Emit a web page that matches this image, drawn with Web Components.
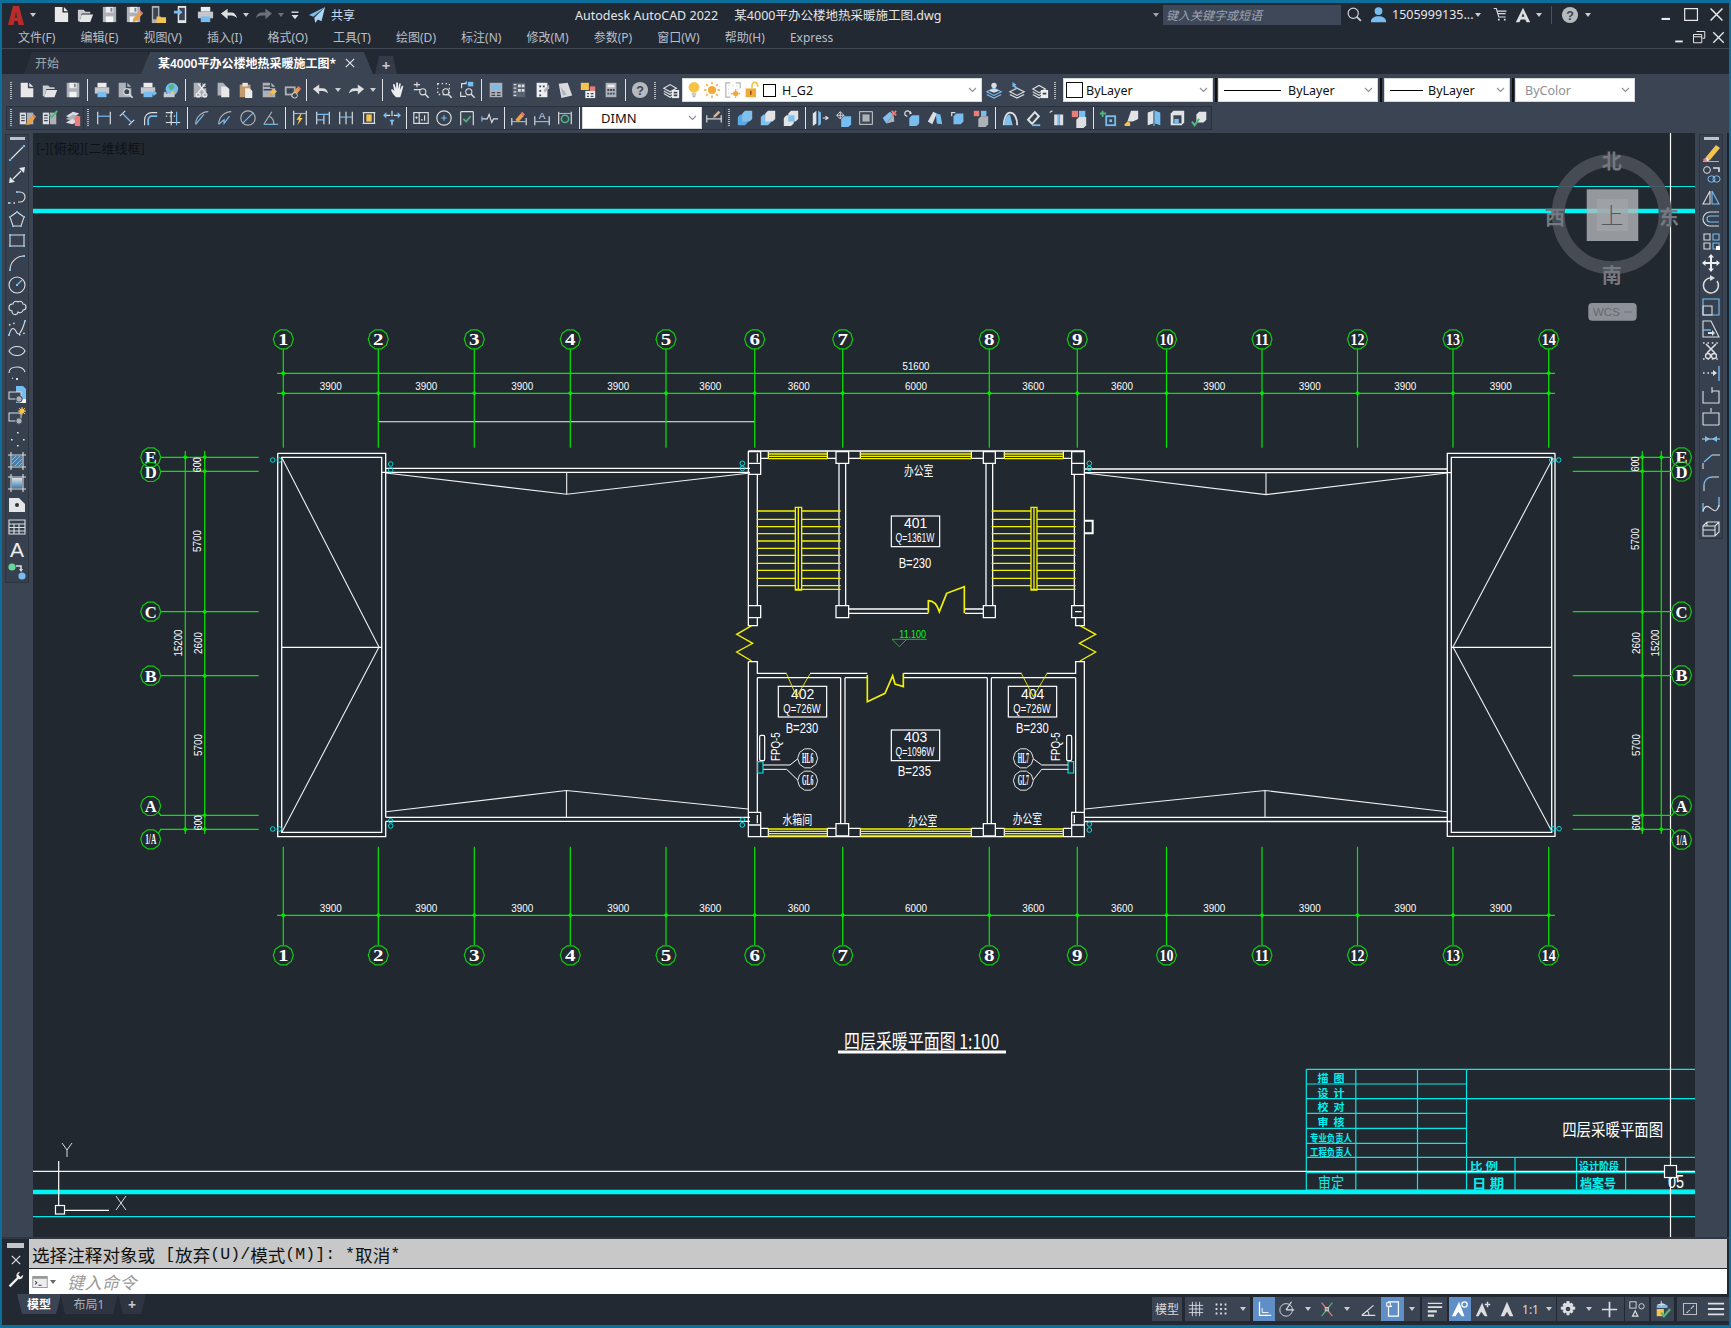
<!DOCTYPE html>
<html lang="zh">
<head>
<meta charset="utf-8">
<title>Autodesk AutoCAD 2022</title>
<style>
  html, body { margin: 0; padding: 0; background: #222933; }
</style>
</head>
<body>
<cad-app>
  <cad-titlebar></cad-titlebar>
  <cad-menubar></cad-menubar>
  <cad-doctabs></cad-doctabs>
  <cad-ribbon></cad-ribbon>
  <cad-main></cad-main>
  <cad-command></cad-command>
  <cad-statusbar></cad-statusbar>
</cad-app>
<script>
(function () {
  const UI_FONT = '"Noto Sans", "Noto Sans CJK SC", sans-serif';
  const CJK_FONT = '"Noto Sans CJK SC", sans-serif';

  const L = "#dcdee1";
  const M = "#aeb2b8";
  const B = "#78bdf0";
  const Y = "#f3c44f";
  const R = "#ea7c7c";
  const G = "#4fb67c";
  const O = "#e8a04a";

  const f = (d, c = L) => `<path d="${d}" fill="${c}"/>`;
  const s = (d, c = L, w = 1.3) => `<path d="${d}" fill="none" stroke="${c}" stroke-width="${w}"/>`;
  const dash = (d, c = L) => `<path d="${d}" fill="none" stroke="${c}" stroke-width="1.4" stroke-dasharray="1.6 2.8"/>`;
  const end = (x, y, c = B) => `<rect x="${x - 1}" y="${y - 1}" width="2" height="2" fill="${c}"/>`;
  const pencil = (c = O) => f("M9 18l1-4 6-7 3 3-6 7z", c) + f("M16 7l1.2-1.4 3 3L19 10z", R);
  const mag = (c = L) => s("M14.5 14.5l4 4", c, 1.6) + `<circle cx="12" cy="12" r="3.4" fill="#3b4453" stroke="${c}" stroke-width="1.2"/>`;
  const doc = (c = L) => f("M3 2h8v6h6v10H3z", c) + f("M12.5 2L17 6.5h-4.5z", c);
  const floppy = f("M3 2h14v16H3z", M) + f("M6 2h8v6H6z", "#eceded") + f("M6 12h8v6H6z", "#f4f4f4") + f("M11 3h2v4h-2z", "#80858c");
  const solid = (x, y, c) => f(`M${x + 3} ${y}h8v9l-3 3H${x}V${y + 3}z`, c);
  const printer = f("M5 2h10v5H5z", "#ececec") + f("M2 7h16v7H2z", "#c4c7cc") + f("M5 12h10v6H5z", B);

  const ICONS = {
    new: doc("#e8e8e8"),
    open: f("M2 5h6l2 2h5v2H6l-2 8H2z", "#c9ccd0") + f("M6 10h12l-3 8H3.5z", "#e4e5e7"),
    save: floppy,
    saveas: floppy + pencil(),
    phonefolder: f("M4 1h8v18H4z", M) + f("M5.5 3h5v12h-5z", "#3b4453") + f("M9 12h4l1 1h5v6H9z", Y),
    phonein: f("M6 1h9v18H6z", "#e4e5e7") + f("M7.5 3h6v13h-6z", "#3b4453") + f("M2 6h5V4l4 3.5L7 11V9H2z", B),
    print: printer,
    undo: f("M8 4v4h4c3 0 5 2 6 6-2-2-4-3-6-3H8v4L1 9z"),
    redo: `<g transform="matrix(-1 0 0 1 20 0)">${f("M8 4v4h4c3 0 5 2 6 6-2-2-4-3-6-3H8v4L1 9z", L)}</g>`,
    redodim: `<g transform="matrix(-1 0 0 1 20 0)">${f("M8 4v4h4c3 0 5 2 6 6-2-2-4-3-6-3H8v4L1 9z", "#6b717b")}</g>`,
    qat: f("M5 5h10v2H5z") + f("M5 10h10l-5 6z"),
    plane: f("M19 1L1 10l5 2z", B) + f("M19 1L7 13l1 6 3-4 4 2z", "#a9d6f5"),
    preview: doc(M) + mag(),
    printto: printer + f("M10 12h6v-2l4 3.5-4 3.5v-2h-6z", B),
    globe: f("M2 12h3v6H2z", M) + `<circle cx="11" cy="9" r="7" fill="${B}"/>` + f("M7 5l5-2 2 4-3 3-3-1z", G) + f("M10 11l4 1-1 4-3-1z", Y) + f("M2 14h12v4H2z", "#c9ccd0"),
    cut: doc(M) + s("M8 3l8 10M16 3L8 13", "#f0f0f0", 1.5) + `<circle cx="8" cy="15.5" r="2.2" fill="none" stroke="#f0f0f0" stroke-width="1.3"/><circle cx="15.5" cy="15.5" r="2.2" fill="none" stroke="#f0f0f0" stroke-width="1.3"/>`,
    copy: f("M4 2h6l3 3v11H4z", M) + f("M8 6h6l3 3v9H8z", "#e8e8e8"),
    paste: f("M3 4h12v14H3z", "#c49a6c") + f("M6 2h6v4H6z", "#e8e8e8") + f("M9 8h5l3 3v8H9z", "#ececec"),
    match: doc(M) + f("M4 5h9v1.5H4zM4 9h9v1.5H4z", "#3b4453") + f("M11 12l5-3 3 3-5 3z", Y) + f("M9 18l3-5 2 2z", O),
    markdoc: f("M2 6h12v10H2z", M) + f("M4 8h8v6H4z", "#3b4453") + pencil() + `<circle cx="13" cy="16" r="3" fill="#3b4453" stroke="${L}"/>`,
    hand: f("M8 18c-2-2-4-4-5.5-7.5-.4-1.3 1-1.8 1.8-1L6 11 4.5 4.5c-.2-1.4 1.5-1.6 1.9-.4L8 9V2.5c0-1.4 1.8-1.4 2 0V9l1.2-5.8c.3-1.3 2-1 1.8.3L12 10l2-4c.6-1.2 2.2-.6 1.7.7L14 13c-.6 2-1 3.5-1.5 5z", "#eeeeee"),
    zoomrt: s("M2 4h7M5.5 1v6M2 9.5h7") + mag(),
    zoomwin: dash("M3 3h13v12H3z") + s("M14.5 14.5l4 4", L, 1.6) + `<circle cx="12" cy="12" r="3.4" fill="#3b4453" stroke="${L}" stroke-width="1.2"/>`,
    zoomprev: s("M4 8V3h5M9 17H3v-5") + f("M11 1h6v5h-6z", B) + f("M7 2l3-2v4z", B) + mag(),
    props: f("M3 2h14v16H3z", M) + f("M5 4h10v6H5z", B) + s("M5 13h4M11 13h4M5 16h4M11 16h4", "#3b4453"),
    dc: f("M3 2h14v16H3z", "#5a6270") + s("M7 4H4M7 8H4M7 12H4M7 16H4", L) + f("M9 4h3v3H9zM13 4h3v3h-3zM9 9h3v3H9zM13 9h3v3h-3z"),
    palette: f("M4 2h12v16H4z", "#eeeeee") + f("M7 5h2v2H7zM11 5h2v2h-2zM7 10h2v2H7zM7 15h2v2H7z", "#3b4453") + f("M12 10l6-6v4l-5 5z", M),
    sheet: f("M3 3l10 -1 5 14-12 3z", "#d8dade") + f("M5 6l7 9-4 1z", M),
    markup: f("M2 2h9v8H2z", Y) + f("M12 6h6v5h-6z", R) + f("M7 11h11v8H7z", "#f0f0f0") + s("M9 14h2M13 14h3M9 17h2M13 17h3", "#3b4453"),
    calc: f("M4 2h12v16H4z", M) + f("M6 4h8v3H6z", "#eeeeee") + f("M6 9h2v2H6zM9 9h2v2H9zM12 9h2v2h-2zM6 13h2v2H6zM9 13h2v2H9zM12 13h2v2h-2z", "#3b4453"),
    help: `<circle cx="10" cy="10" r="9" fill="#b6b9be"/><text x="10" y="15" font-family="Liberation Sans, sans-serif" font-weight="700" font-size="14" text-anchor="middle" fill="#40464f">?</text>`,
    layerstate: s("M2 8l7-4 7 4-7 4z M2 11l7 4 3-2 M2 14l7 4 3-2") + f("M11 10h8v9h-8z", "#eeeeee") + f("M13 12h4v2h-4zM13 15h4v2h-4z", "#3b4453"),
    bulb: `<circle cx="10" cy="7" r="6" fill="#f6c343"/>` + f("M7.5 13h5v3h-5z", "#c9ccd0") + f("M8.5 16h3v2h-3z", M),
    sun: `<circle cx="10" cy="10" r="4.5" fill="#f3a93a"/>` + s("M10 1v3M10 16v3M1 10h3M16 10h3M3.5 3.5l2 2M14.5 14.5l2 2M3.5 16.5l2-2M14.5 5.5l2-2", "#f3a93a", 1.6),
    frozen: s("M7 2H2v16h5M13 2h5v6", M) + dash("M5 5h10v10H5z") + `<circle cx="13" cy="14" r="3" fill="#f3a93a"/>` + s("M13 9v2M13 17v2M8 14h2M16 14h2", "#f3a93a"),
    lock: f("M2 8h13v11H2z", "#f3a93a") + s("M10 8V4a3.5 3.5 0 0 1 7 0v2", "#f6c343", 2) + f("M7.5 11h2v5h-2z", "#8a5a14"),
    swatch: `<rect x="2" y="2" width="16" height="16" fill="#fff" stroke="#000" stroke-width="1.3"/>`,
    laycur: s("M2 12l8-4 8 4-8 4z M2 15l8 4 8-4", B) + `<circle cx="10" cy="5" r="3" fill="${L}"/>` + f("M5 11c0-3 10-3 10 0l-5 2z"),
    laymatch: s("M2 12l8-4 8 4-8 4z M2 15l8 4 8-4") + f("M5 1l4 3-1 1 3 3-2 1-3-3-1 1z", B),
    layprev: s("M2 9l7-4 7 4-7 4z M2 12l7 4 3-2 M2 15l7 4 3-2") + f("M11 10h8v9h-8z", "#eeeeee") + f("M13 13h4v2h-4z", "#3b4453"),
    book: f("M2 4h7v13H2z", "#dcdee1") + f("M10 4h7v13h-7z", M) + s("M3.5 7h4M3.5 10h4M3.5 13h4", "#3b4453") + pencil(),
    bookcheck: f("M2 4h7v13H2z", "#dcdee1") + f("M10 4h7v13h-7z", M) + s("M3.5 7h4M3.5 10h4M3.5 13h4", "#3b4453") + s("M9 6l3 3 6-7", G, 2),
    stack: f("M2 8l8-5 7 2-8 5z", L) + f("M2 11l8-5 7 2-8 5z", M) + f("M2 15l7-4 5 1v3l-5 2z", L) + f("M12 8h6v11h-6z", R),
    dlin: s("M3 3v14M17 3v14") + s("M3 8h14", B),
    dali: s("M2 8l6-6M12 18l6-6") + s("M5 5l10 10", B),
    darc: s("M4 18v-6a8 8 0 0 1 8-8h6") + s("M8 18v-6a4 4 0 0 1 4-4h6", B, 2),
    dord: s("M2 15h16M2 4h8M8 2v16") + s("M14 3v15", B) + dash("M2 8h12"),
    drad: s("M3 17A14 14 0 0 1 17 3", M) + s("M3 17L12 6", B),
    djog: s("M3 17A14 14 0 0 1 17 3", M) + s("M3 17l6-5v4l6-8", B),
    ddia: `<circle cx="10" cy="10" r="8" fill="none" stroke="${M}" stroke-width="1.3"/>` + s("M4 16L16 4", B),
    dang: s("M2 17h16", B) + s("M2 17L11 3", M) + s("M8 8a9 9 0 0 1 5 9", M),
    dquick: s("M3 2v16M17 2v16") + s("M3 5h14", B) + f("M11 5l-5 7h3l-2 6 6-8h-3l2-5z", Y),
    dbase: s("M3 3v14M17 3v14M11 7v10") + s("M3 6h14M3 12h8", B),
    dcont: s("M3 3v14M10 3v14M17 3v14") + s("M3 9h14", B),
    dspace: s("M3 4h14M3 16h14") + f("M7 6h6v8H7z", Y) + s("M4 4v12M16 4v12", L),
    dbreak: s("M1 7h7M12 7h7") + s("M10 2v6M10 12v6") + f("M7 12h6l-3 4z", B) + s("M1 7l2-2v4z M19 7l-2-2v4z", B),
    dtol: `<rect x="2" y="4" width="16" height="12" fill="none" stroke="${L}" stroke-width="1.3"/>` + s("M8 4v12") + f("M3.5 9.5l1.5-1.5 1.5 1.5-1.5 1.5z") + s("M10 12h2M14 7v6"),
    dcen: `<circle cx="10" cy="10" r="8" fill="none" stroke="${L}" stroke-width="1.3"/>` + s("M10 7v6M7 10h6", B),
    dinsp: s("M3 3h14M3 3v15M17 3v15") + f("M5 6h10v10H5z", "#3b4453") + s("M6 11l3 3 5-6", G, 1.8),
    djogl: s("M1 11h6l2-5 3 9 2-4h5") + s("M1 8v6", B),
    dedit: s("M2 10v8M18 10v8") + s("M2 14h16", B) + f("M6 12l6-7 3 3-6 7z", O) + f("M12 5l1.5-2 3 3L15 8z", R),
    dtedit: s("M2 8v10M18 8v10") + s("M2 14h16", B) + `<text x="10" y="11" font-family="Liberation Sans, sans-serif" font-size="11" text-anchor="middle" fill="${L}">A</text>`,
    dupd: s("M3 3v14M17 3v14") + s("M3 5h14", B) + `<circle cx="10" cy="11" r="4" fill="none" stroke="${G}" stroke-width="1.8"/>`,
    dstyle: s("M2 7v8M18 7v8") + s("M2 11h16") + f("M10 7l5-5 2 2-5 5-3 1z", "#d8b48a"),
    un: solid(2, 6, "#5aa8e4") + solid(7, 2, "#7fc0ee"),
    sb: solid(2, 6, "#7fc0ee") + solid(7, 2, "#e2e3e5"),
    it: solid(7, 2, "#e2e3e5") + solid(2, 7, "#e2e3e5") + f("M7 7h7v7H7z", "#7fc0ee"),
    xl: f("M2 5l4-3v14l-4 3z", "#e2e3e5") + f("M8 2l3 2v13l-3 2z", B) + s("M13 10h6M16 8l3 2-3 2", L),
    mvf: s("M7 3v8M3 7h8M7 3l-2 2M7 3l2 2M3 7l2-2M3 7l2 2M11 7L9 5M11 7L9 9M7 11l-2-2M7 11l2-2", L, 1) + solid(8, 8, B),
    cpf: f("M4 3h14v14H4z", "#3b4453") + `<rect x="3" y="3" width="14" height="14" fill="none" stroke="${L}"/>` + f("M6 6h8v8H6z", M),
    dlf: f("M3 10l8-7 4 3-8 10z", "#7fc0ee") + f("M7 16l8-10 1 8z", M) + s("M13 2l5 5M18 2l-5 5", R, 2),
    rtf: s("M8 5a3 3 0 1 0-3 3", L) + f("M8 2l2 3-3 1z") + solid(7, 7, B),
    tpf: f("M2 14l6-11 4 2-5 12z", L) + f("M11 5l5 1 2 11-6-1z", B),
    cof: s("M3 8V4h4") + solid(5, 5, B),
    clf: f("M2 2h6v6H2z", R) + f("M10 2h6v6h-6z", B) + solid(7, 8, M),
    imp: s("M3 18c0-7 3-14 7-14 5 0 8 6 8 14", L, 2) + f("M4 18c0-6 2-12 6-12l3 12z", "#7fc0ee"),
    shl: f("M3 12l9-10 6 6-9 10z", "#e2e3e5") + f("M6 12l6-7 3 3-6 7z", "#3b4453") + f("M9 17h9v2H9z", B),
    clr: s("M3 4l3-2") + f("M8 6h4v12H8zM14 6h4v12h-4z", L) + f("M12 6h2v12h-2z", B),
    sep: f("M2 2h7v7H2z", R) + f("M10 2h7v7h-7z", B) + solid(7, 9, L),
    plus: s("M4 2v7M1 5h7", G, 2) + f("M8 8h10v10H8z", "#3b4453") + `<rect x="8" y="8" width="10" height="10" fill="none" stroke="${B}" stroke-width="2"/><rect x="11.5" y="11.5" width="3" height="3" fill="${B}"/>`,
    brm: f("M10 2h8v9l-6 3H6z", "#e2e3e5") + f("M6 14l3 1v4H3v-2z", Y),
    mir: f("M3 4l6-2v14l-6 2z", "#e2e3e5") + f("M11 2l6 2v14l-6-2z", B) + s("M10 1v18", B),
    bx: f("M3 5l3-3h12v13l-3 3H3z", "#e2e3e5") + f("M6 7h9v9H6z", "#3b4453") + f("M7 11h5v5H7z", B),
    chk: solid(6, 3, "#e2e3e5") + s("M1 14l3 4 5-7", G, 2.2),
    line: s("M4 16L16 4", "#e6e8ea", 1.1) + end(3, 17, B) + end(17, 3, B),
    xline: s("M6 14L14 6", "#e6e8ea") + f("M18 2l-1 6-5-5zM2 18l6-1-5-5z", "#e6e8ea"),
    pline: dash("M2 16h8") + s("M10 5h3a5 5 0 0 1 0 10h-2", L, 1.1) + end(2, 16, B) + end(10, 5, B),
    poly: s("M10 3l7 5-3 9H6L3 8z", L, 1.1) + end(10, 3, B) + end(17, 8, B) + end(3, 8, B) + end(14, 17, B) + end(6, 17, B),
    rect: s("M3 4h14v11H3z", L, 1.1) + end(3, 4, B) + end(17, 4, B) + end(3, 15, B) + end(17, 15, B),
    arc: s("M3 17A14 14 0 0 1 17 3", L, 1.1) + end(3, 17, B) + end(17, 3, B),
    circle: `<circle cx="10" cy="10" r="8" fill="none" stroke="${L}" stroke-width="1.1"/>` + s("M10 10l5-5", B) + end(10, 10, B),
    cloud: s("M6 7a3 3 0 0 1 5-2 3 3 0 0 1 5 2 3 3 0 0 1 0 6 3 3 0 0 1-5 2 3 3 0 0 1-6-1 3 3 0 0 1 1-7z", L, 1.1),
    spline: dash("M2 6l6-2M12 16l6-2") + s("M2 16c3-12 7-4 8-2s4 2 8-12", L, 1.1) + end(2, 16, B) + end(18, 2, B),
    ellipse: s("M2 10c3-6 13-6 16 0c-3 6-13 6-16 0z", L, 1.1),
    ellarc: s("M10 4c4 0 7 2 8 5M2 10c0-4 3-6 8-6M5 15l1 .5", L, 1.1) + f("M9 15h2v2H9z"),
    block: f("M9 1h7l3 3v14H9z", B) + f("M11 14h8v4h-8z", "#f2f2f2") + f("M2 7h12v7H2z", "#3b4453") + `<rect x="2" y="7" width="12" height="7" fill="none" stroke="${L}"/><circle cx="12" cy="14" r="3.2" fill="${M}" stroke="#3b4453"/>`,
    blockn: f("M2 6h12v8H2z", "#3b4453") + `<rect x="2" y="6" width="12" height="8" fill="none" stroke="${L}"/><circle cx="12" cy="14" r="3.2" fill="${M}" stroke="#3b4453"/>` + `<circle cx="15" cy="4" r="2.5" fill="${Y}"/>` + s("M15 0v8M11 4h8M12 1l6 6M18 1l-6 6", Y, 1),
    point: f("M10 3h1.6v1.6H10zM4 10h1.6v1.6H4zM16 10h1.6v1.6H16zM10 16h1.6v1.6H10z", "#e6e8ea"),
    hatch: s("M1 4h18M1 16h18M4 1v18M16 1v18", L, 1.1) + f("M5 5h10v10H5z", "#4d7ea6") + s("M5 9l4-4M5 13l8-8M8 15l7-7M12 15l3-3", B, 1),
    grad: s("M1 4h18M1 16h18M4 1v18M16 1v18", L, 1.1) + `<rect x="5" y="5" width="10" height="10" fill="url(#gr)"/><defs><linearGradient id="gr" x1="0" y1="0" x2="0" y2="1"><stop offset="0" stop-color="#dde3ea"/><stop offset="1" stop-color="#3f7fb2"/></linearGradient></defs>`,
    region: f("M2 3h10l6 6v8H2z", "#e3e5e8") + `<circle cx="10" cy="10" r="2" fill="#333"/>`,
    table: s("M2 3h16v14H2zM2 7h16M2 10.5h16M2 14h16M7 7v10M12 7v10", L, 1.1),
    texta: `<text x="10" y="17.5" font-family="Liberation Sans, sans-serif" font-size="21" text-anchor="middle" fill="#eceef0">A</text>`,
    addsel: `<circle cx="5" cy="6" r="3.6" fill="#6ad79a"/><circle cx="15" cy="15" r="3.6" fill="${B}"/>` + s("M9 5h5v4", L, 1.6) + f("M12 8h4l-2 3z"),
    erase: f("M5 14L15 2l4 3L9 17z", Y) + f("M5 14l4 3-2 1H3z", "#eee") + f("M2 18h16v1H2z", M) + `<circle cx="4" cy="17" r="1.8" fill="${R}"/>`,
    cpy: `<circle cx="6" cy="5" r="3.4" fill="none" stroke="${L}"/>` + s("M12 3h6v4", L, 1.6) + `<ellipse cx="10.5" cy="14" rx="3.6" ry="3.2" fill="none" stroke="${B}"/><ellipse cx="15.5" cy="14" rx="3.6" ry="3.2" fill="none" stroke="${B}"/>`,
    mirror: s("M2 17L9 4v13z", L, 1.1) + s("M18 17L11 4v13z", B, 1.1),
    offset: s("M18 3H9a6 6 0 0 0 0 14h9", L, 1.1) + s("M18 7H9a2 2 0 0 0 0 6h9", B, 1.1),
    array: s("M3 3h6v6H3zM3 12h6v6H3z", L, 1.1) + s("M12 3h6v6h-6z", B, 1.1) + s("M12 12h6v6h-6z", B, 1.1) + f("M15 15h4v4h-4z", "#fff"),
    move: f("M10 1l3 3.5h-2V9h4.5V7l3.5 3-3.5 3v-2H11v4.5h2L10 19l-3-3.5h2V11H4.5v2L1 10l3.5-3v2H9V4.5H7z", "#eceef0"),
    rotate: s("M16 6a7.5 7.5 0 1 1-5-3", L, 1.4) + f("M9 0l5 3-5 3z"),
    scale: s("M2 2h16v16H2z", B, 1.1) + s("M2 9h9v9H2z", L, 1.1),
    stretch: s("M2 2h8l8 16H2z", L, 1.1) + s("M2 11h8", B) + f("M7 13h4v-2l3 3-3 3v-2H7z"),
    trim: dash("M2 2h16M2 18h16") + s("M5 3l9 9M15 3l-9 9", L, 1.6) + `<circle cx="7" cy="15" r="2.5" fill="none" stroke="${L}" stroke-width="1.3"/><circle cx="13" cy="15" r="2.5" fill="none" stroke="${L}" stroke-width="1.3"/>`,
    extend: dash("M2 10h8") + s("M10 10h5") + f("M12 7l4 3-4 3z") + s("M18 3v15", B),
    brk: s("M2 6v12h16V6h-7M11 2v6", L, 1.1),
    brkat: s("M2 18V6h7M11 6h7v12M10 1v6M2 18h16", L, 1.1),
    join: s("M1 10h18", M) + f("M4 7l5 3-5 3zM16 7l-5 3 5 3z", B),
    chamfer: s("M2 18v-6M11 4h8", L, 1.1) + s("M3 11L11 4", B),
    fillet: s("M3 18v-6M11 4h7", L, 1.1) + s("M3 12a8 8 0 0 1 8-8", B),
    blend: s("M2 17V8M18 2v10", B) + s("M2 16c5-14 12 10 16-6", L, 1.1),
    cube3d: s("M2 9l4-4h12v10l-4 4H2zM2 9h12v10M14 9l4-4M6 5v4M2 13h12", L, 1.1),
    term: `<rect x="1" y="3" width="18" height="14" fill="#eee" stroke="#888"/>` + f("M1 3h18v3H1z", "#999") + s("M4 9l2 2-2 2M8 14h4", "#444"),
    wrench: f("M15.5 1a4.5 4.5 0 0 0-4 6.5L2 17l2 2 9.5-9.5A4.5 4.5 0 0 0 19 4.5L16 7l-3-3 2.5-3z", "#f0f0f0"),
    grid: s("M2 6h16M2 10h16M2 14h16M6 2v16M10 2v16M14 2v16", L, 1),
    dots: f("M4 4h2v2H4zM9 4h2v2H9zM14 4h2v2h-2zM4 9h2v2H4zM9 9h2v2H9zM14 9h2v2h-2zM4 14h2v2H4zM9 14h2v2H9zM14 14h2v2h-2z"),
    ortho: s("M5 2v15h13", "#fff", 1.4) + s("M8 9v5h7", "#fff", 1),
    polar: `<circle cx="9" cy="11" r="7" fill="none" stroke="${L}"/>` + s("M9 11h9M9 11l6-9", L),
    osnap: s("M4 3l12 15", R) + s("M16 3L4 18", G) + `<rect x="8" y="8.5" width="3.5" height="3.5" fill="none" stroke="${L}"/>`,
    iso: s("M2 17h15M2 17L15 6", L) + s("M8 11.5a8 8 0 0 1 2 5.5", L),
    snap3d: s("M5 2h11v16H5zM5 7h4M5 7V2", "#fff", 1.3) + f("M3 3h4v4H3z", "#6b9bd1") + `<rect x="3" y="3" width="4" height="4" fill="none" stroke="#fff"/>`,
    lweight: f("M2 3h16v1.5H2zM2 7h16v2H2zM2 11.5h10v2.5H2zM2 16h7v2.5H2z"),
    anno1: f("M9 2L1 18h4l3-5 4 5h3z", "#fff") + `<circle cx="15" cy="5" r="3" fill="none" stroke="#fff" stroke-width="1.4"/>`,
    anno2: f("M9 3L2 18h3l3-5 4 5h3z", L) + s("M15 2v6M12 5h6", L, 1.6),
    anno3: f("M10 2L3 18h4l3-5 3 5h4z", L),
    gear: f("M8.5 1h3l.5 3 2-1 2 2-1 2 3 .5v3l-3 .5 1 2-2 2-2-1-.5 3h-3l-.5-3-2 1-2-2 1-2-3-.5v-3l3-.5-1-2 2-2 2 1z", L) + `<circle cx="10" cy="10" r="2.6" fill="#3b4453"/>`,
    cross: f("M9 1h2v8h8v2h-8v8H9v-8H1V9h8z"),
    shapes: `<rect x="2" y="2" width="7" height="7" fill="none" stroke="${L}"/><circle cx="15" cy="7" r="3" fill="none" stroke="${L}"/>` + s("M5 18l3-6 3 6z", L),
    isolate: f("M3 6l6-3 6 3v3H3z", B) + f("M3 10h8v8H3z", Y) + s("M8 14l3 4 7-8", G, 2.4) + s("M8 1v6M4 5h8", L, 1),
    full: `<rect x="2" y="3" width="16" height="14" fill="none" stroke="${L}"/>` + f("M10.5 9.5L15 5v3l-1-1-2 3zM9.5 10.5L5 15h3l-1-1 3-2z", L),
    menu3: f("M1 3h18v2H1zM1 9h18v2H1zM1 15h18v2H1z"),
    searchmag: s("M12.5 12.5l5 5", "#cfd3d8", 2) + `<circle cx="8.5" cy="8.5" r="6" fill="none" stroke="#cfd3d8" stroke-width="1.4"/>`,
    user: `<circle cx="10" cy="6" r="4.6" fill="${B}"/>` + f("M1 19c0-5 4-7 9-7s9 2 9 7z", B),
    cart: s("M2 3h3l3 10h8M6 6h11M7 9h9", L, 1.3) + f("M7 15h2v2H7zM14 15h2v2h-2z"),
    alogo: f("M10 2L2 18h4l1.5-3h5L14 18h4z", L) + f("M10 8l-1.5 4h3z", "#222933"),
    acad: f("M7 1h6l5 19h-5.5l-.8-4H8.3l-.8 4H2z", "#b92c2c") + f("M10 6.5L9 12.5h2z", "#222933"),
    win_min: f("M3 14h10v2.5H3z", "#e8e8e8"),
    win_max: s("M2 3h15v14H2z", "#e8e8e8", 1.4),
    win_x: s("M3 3l14 14M17 3L3 17", "#e8e8e8", 1.8),
    doc_restore: s("M6 2h11v9h-3M2 6h11v11H2zM2 6v3h11", "#e8e8e8", 1.3),
  };

  class CadIcon extends HTMLElement {
    connectedCallback() {
      const name = this.getAttribute("name");
      const size = this.getAttribute("size") || 18;
      if (!this.shadowRoot) this.attachShadow({ mode: "open" });
      this.shadowRoot.innerHTML = `
        <style>:host { display: inline-flex; align-items: center; justify-content: center; flex: none; } svg { display: block; overflow: visible; }</style>
        <svg width="${size}" height="${size}" viewBox="0 0 20 20">${ICONS[name] || ""}</svg>`;
    }
  }

  class CadCaret extends HTMLElement {
    constructor() {
      super();
      this.attachShadow({ mode: "open" }).innerHTML = `
        <style>
          :host { display: inline-flex; align-items: center; justify-content: center; flex: none; }
          i { width: 0; height: 0; border-left: 3px solid transparent; border-right: 3px solid transparent; border-top: 4px solid var(--caret, #c9ccd0); }
        </style><i></i>`;
    }
  }

  class CadGrip extends HTMLElement {
    constructor() {
      super();
      this.attachShadow({ mode: "open" }).innerHTML = `
        <style>
          :host { display: block; flex: none; width: 2px; height: 17px; margin: 0 3px;
            background: repeating-linear-gradient(to bottom, #b8bcc2 0 1px, transparent 1px 2px); }
        </style>`;
    }
  }

  // one row of tools: "|" divider, "::" gripper, "^" dropdown, "_" 1px shim, anything else an icon
  function toolRow(spec, cell = 23, size = 18) {
    return spec.trim().split(/\s+/).map((t) => {
      if (t === "|") return `<span class="sep"></span>`;
      if (t === "::") return `<cad-grip></cad-grip>`;
      if (t === "_") return `<span style="width:1px;flex:none"></span>`;
      if (t === "^") return `<cad-caret style="width:12px"></cad-caret>`;
      return `<cad-icon name="${t}" size="${size}" style="width:${cell}px"></cad-icon>`;
    }).join("");
  }

  class CadCombo extends HTMLElement {
    constructor() {
      super();
      this.attachShadow({ mode: "open" }).innerHTML = `
        <style>
          :host { display: flex; align-items: center; flex: none; box-sizing: border-box; height: 24px; background: #fff;
            border: 1px solid #d5d7da; color: #111; font: 12.5px ${UI_FONT}; padding-left: 2px; overflow: hidden; }
          :host([short]) { height: 23px; }
          .body { flex: 1; display: flex; align-items: center; gap: 3px; min-width: 0; white-space: nowrap; }
          svg { flex: none; margin-right: 4px; }
        </style>
        <div class="body"><slot></slot></div>
        <svg width="9" height="6" viewBox="0 0 9 6"><path d="M1 1l3.5 3.5L8 1" fill="none" stroke="#8c9096" stroke-width="1.1"/></svg>`;
    }
  }

  class CadTitlebar extends HTMLElement {
    constructor() {
      super();
      this.attachShadow({ mode: "open" }).innerHTML = `
        <style>
          :host { display: grid; grid-template-columns: 573px 1fr auto; align-items: center; height: 23px; flex: none;
            color: #e4e6e9; font: 12.5px ${UI_FONT}; white-space: nowrap; }
          .left, .right { display: flex; align-items: center; height: 23px; }
          .left { padding-left: 3px; }
          .spacer { flex: none; }
          .search { box-sizing: border-box; width: 178px; height: 20px; background: #3f4859; color: #9ea5b0; font: italic 12px ${CJK_FONT};
            display: flex; align-items: center; padding-left: 3px; }
          .div { width: 1px; height: 18px; background: #4a5260; margin: 0 7px 0 8px; flex: none; }
          .share { font-size: 12px; color: #c6dbee; }
        </style>
        <div class="left">
          <cad-icon name="acad" size="20" style="width:22px"></cad-icon>
          <cad-caret style="width:12px"></cad-caret>
          <span class="spacer" style="width:10px"></span>
          ${toolRow("new open save saveas phonefolder phonein print undo", 24, 19)}
          <cad-caret style="width:10px"></cad-caret>
          <cad-icon name="redodim" size="19" style="width:24px"></cad-icon>
          <cad-caret style="width:12px;--caret:#6b717b"></cad-caret>
          <cad-icon name="qat" size="14" style="width:16px"></cad-icon>
          <cad-icon name="plane" size="18" style="width:28px"></cad-icon>
          <span class="share">共享</span>
        </div>
        <div>Autodesk AutoCAD 2022 &nbsp;&nbsp;&nbsp;&nbsp;某4000平办公楼地热采暖施工图.dwg</div>
        <div class="right">
          <cad-caret style="width:14px;--caret:#9ea5b0"></cad-caret>
          <div class="search">键入关键字或短语</div>
          <cad-icon name="searchmag" size="17" style="width:26px"></cad-icon>
          <cad-icon name="user" size="17" style="width:22px"></cad-icon>
          <span class="spacer" style="width:3px"></span>
          <span style="width:79px">1505999135...</span>
          <cad-caret style="width:14px"></cad-caret>
          <span class="spacer" style="width:4px"></span>
          <cad-icon name="cart" size="17" style="width:22px"></cad-icon>
          <cad-icon name="alogo" size="18" style="width:24px"></cad-icon>
          <cad-caret style="width:8px"></cad-caret>
          <span class="div"></span>
          <cad-icon name="help" size="18" style="width:22px"></cad-icon>
          <cad-caret style="width:14px"></cad-caret>
          <span class="spacer" style="width:60px"></span>
          <cad-icon name="win_min" size="17" style="width:24px"></cad-icon>
          <cad-icon name="win_max" size="17" style="width:25px"></cad-icon>
          <cad-icon name="win_x" size="17" style="width:25px"></cad-icon>
        </div>`;
    }
  }

  class CadMenubar extends HTMLElement {
    constructor() {
      super();
      const items = ["文件(F)", "编辑(E)", "视图(V)", "插入(I)", "格式(O)", "工具(T)", "绘图(D)", "标注(N)", "修改(M)", "参数(P)", "窗口(W)", "帮助(H)", "Express"];
      this.attachShadow({ mode: "open" }).innerHTML = `
        <style>
          :host { display: flex; align-items: center; gap: 25.1px; height: 22px; flex: none; box-sizing: content-box;
            padding-left: 16px; border-bottom: 1px solid #3d4652; color: #b9bec6; font: 12px ${UI_FONT}; white-space: nowrap; position: relative; }
          .wc { margin-left: auto; display: flex; align-items: center; padding-right: 1px; }
        </style>
        ${items.map((m) => `<span>${m}</span>`).join("")}
        <div class="wc">
          <cad-icon name="win_min" size="15" style="width:19px"></cad-icon>
          <cad-icon name="doc_restore" size="15" style="width:19px"></cad-icon>
          <cad-icon name="win_x" size="15" style="width:19px"></cad-icon>
        </div>`;
    }
  }

  class CadDoctabs extends HTMLElement {
    constructor() {
      super();
      this.attachShadow({ mode: "open" }).innerHTML = `
        <style>
          :host { display: flex; align-items: flex-end; height: 25px; flex: none; padding-left: 22px; font: 12px ${UI_FONT}; white-space: nowrap; }
          .tab { height: 22px; display: flex; align-items: center; box-sizing: border-box; }
          .start { width: 124px; background: #2a313c; color: #a4a9b0; padding-left: 11px; clip-path: polygon(8px 0, 100% 0, 100% 100%, 0 100%); }
          .doc { width: 232px; margin-left: -7px; background: #3b4453; color: #fff; padding-left: 17px; font-weight: 600;
            clip-path: polygon(9px 0, calc(100% - 9px) 0, 100% 100%, 0 100%); }
          .doc cad-icon { margin-left: 8px; }
          .add { width: 22px; height: 18px; margin-left: 2px; background: #333b48; display: flex; align-items: center; justify-content: center;
            clip-path: polygon(4px 0, calc(100% - 4px) 0, 100% 100%, 0 100%); color: #c4c8ce; font-size: 15px; font-weight: 700; }
        </style>
        <div class="tab start">开始</div>
        <div class="tab doc">某4000平办公楼地热采暖施工图*<cad-icon name="win_x" size="12"></cad-icon></div>
        <div class="add">+</div>`;
    }
  }

  class CadRibbon extends HTMLElement {
    constructor() {
      super();
      this.attachShadow({ mode: "open" }).innerHTML = `
        <style>
          :host { display: flex; flex-direction: column; height: 59px; flex: none; background: #3b4453; box-sizing: border-box; padding: 4px 0 0 5px; gap: 4px; }
          .row { display: flex; align-items: center; height: 24px; }
          .row2 { height: 23px; }
          .sep { width: 6px; height: 22px; flex: none; position: relative; background: linear-gradient(#e0e2e5,#e0e2e5) center / 1px 100% no-repeat; }
          .gap { width: 5px; height: 24px; flex: none; background: linear-gradient(#111,#111) center / 2px 100% no-repeat; }
          .p2 { display: flex; align-items: center; height: 22px; outline: 1px solid #2a313c; background: #37404e; flex: none; }
          .mini { width: 15px; height: 14px; flex: none; border: 1px solid #111; background: #fff; margin-right: 0; }
          .lay { display: flex; align-items: center; }
        </style>
        <div class="row">
          ${toolRow(":: new open save | print preview printto globe | cut copy paste match markdoc | undo ^ redo ^ | _ hand zoomrt zoomwin zoomprev | props dc palette sheet markup calc | help :: layerstate")}
          <cad-combo style="width:300px">
            <span class="lay">
              <cad-icon name="bulb" size="18" style="width:18px"></cad-icon>
              <cad-icon name="sun" size="18" style="width:18px"></cad-icon>
              <cad-icon name="frozen" size="18" style="width:23px"></cad-icon>
              <cad-icon name="lock" size="16" style="width:15px"></cad-icon>
              <cad-icon name="swatch" size="15" style="width:20px"></cad-icon>
            </span>
            <span>H_G2</span>
          </cad-combo>
          ${toolRow("laycur laymatch layprev ::")}
          <span style="width:4px;flex:none"></span>
          <cad-combo style="width:150px"><span class="mini"></span>ByLayer</cad-combo>
          <span class="gap"></span>
          <cad-combo style="width:160px"><span style="width:57px;height:1px;background:#000;margin:0 4px 0 3px"></span>ByLayer</cad-combo>
          <span class="gap" style="width:6px"></span>
          <cad-combo style="width:126px"><span style="width:33px;height:1px;background:#000;margin:0 2px 0 3px"></span>ByLayer</cad-combo>
          <span class="gap"></span>
          <cad-combo style="width:120px;color:#8c9096"><span style="margin-left:7px">ByColor</span></cad-combo>
        </div>
        <div class="row row2">
          <div class="p2">${toolRow(":: book bookcheck stack")}</div>
          <div class="p2" style="margin-left:0">
            ${toolRow(":: dlin dali darc dord | drad djog ddia dang | dquick dbase dcont dspace dbreak | dtol dcen dinsp djogl | dedit dtedit dupd |")}
            <cad-combo short style="width:120px;padding-left:18px;font-size:13px">DIMN</cad-combo>
            ${toolRow("dstyle")}
          </div>
          <div class="p2">${toolRow(":: un sb it | xl mvf cpf dlf rtf tpf cof clf | imp shl clr sep | plus brm mir bx chk")}</div>
        </div>`;
    }
  }

  class CadDock extends HTMLElement {
    connectedCallback() {
      if (this.shadowRoot) return;
      const cells = this.getAttribute("icons").split(" ").map((n) => `<cad-icon name="${n}" size="20" style="height:22px"></cad-icon>`).join("");
      const right = this.hasAttribute("right");
      this.attachShadow({ mode: "open" }).innerHTML = `
        <style>
          :host { display: block; flex: none; box-sizing: border-box; background: #3b4453; padding-top: 1px;
            width: ${right ? 34 : 31}px; padding-left: ${right ? 4 : 3}px; ${right ? "border-right: 2px solid #1d232c;" : ""} }
          .panel { box-sizing: border-box; width: 24px; display: flex; flex-direction: column; align-items: center; border: 1px solid #2c333e; background: #37404e; }
          .grip { width: 15px; height: 3px; margin: 2px 0 1.5px; background-image: radial-gradient(#c8ccd2 .7px, transparent .8px); background-size: 2px 2px; flex: none; }
        </style>
        <div class="panel"><div class="grip"></div>${cells}</div>`;
    }
  }

  class CadViewcube extends HTMLElement {
    constructor() {
      super();
      const lab = (x, y, t) => `<text x="${x}" y="${y}" text-anchor="middle" dominant-baseline="central" font-family='${CJK_FONT}' font-size="20" font-weight="700" fill="#75797f">${t}</text>`;
      this.attachShadow({ mode: "open" }).innerHTML = `
        <style>
          :host { display: block; position: absolute; left: 1512px; top: 12px; width: 135px; height: 180px; }
          svg { display: block; }
        </style>
        <svg width="135" height="180" viewBox="1545 145 135 180">
          <circle cx="1611.7" cy="214.3" r="53.5" fill="none" stroke="#4a4f59" stroke-width="13" opacity=".9"/>
          <rect x="1586.7" y="189.3" width="51.6" height="51.7" fill="#b6b8bc" opacity=".78"/>
          <rect x="1597" y="199" width="31" height="32" fill="#a3a5aa" opacity=".7"/>
          <text x="1612" y="214" text-anchor="middle" dominant-baseline="central" font-family='${CJK_FONT}' font-size="23" font-weight="300" fill="#55585e">上</text>
          ${lab(1611.7, 160.7, "北")}${lab(1611.7, 274, "南")}${lab(1555, 216, "西")}${lab(1669, 216, "东")}
          <rect x="1588.3" y="303" width="48.4" height="17.7" rx="4" fill="#8d9097"/>
          <text x="1593" y="312" dominant-baseline="central" font-family="Liberation Sans, sans-serif" font-size="11.5" fill="#666a71">WCS</text>
          <path d="M1624 312h8" stroke="#777b82" stroke-width="1.2"/>
        </svg>`;
    }
  }

  // ---- drawing, all in screen pixels of the reference
  const GREEN = "#00e800";
  const RING = "#12c812";
  const CYAN = "#00e8e8";
  const YEL = "#f2f200";

  function t(x, y, str, o = {}) {
    const fam = o.font || "Liberation Sans, sans-serif";
    const attrs = [
      `x="${x}"`, `y="${y}"`, `font-size="${o.fs || 11.5}"`, `fill="${o.fill || "#fff"}"`, `font-family='${fam}'`,
      `text-anchor="middle"`, `dominant-baseline="central"`,
    ];
    if (o.w) attrs.push(`textLength="${o.w}"`, `lengthAdjust="spacingAndGlyphs"`);
    if (o.weight) attrs.push(`font-weight="${o.weight}"`);
    if (o.rot) attrs.push(`transform="rotate(${o.rot} ${x} ${y})"`);
    return `<text ${attrs.join(" ")}>${str}</text>`;
  }

  function poly(cx, cy, r, n = 10) {
    const pts = [];
    for (let i = 0; i < n; i += 1) {
      const a = (i / n) * Math.PI * 2 + Math.PI / n;
      pts.push(`${(cx + r * Math.sin(a)).toFixed(1)},${(cy - r * Math.cos(a)).toFixed(1)}`);
    }
    return pts.join(" ");
  }

  function bubble(x, y, label, w) {
    const serif = "Liberation Serif, serif";
    return `<polygon points="${poly(x, y, 10)}" fill="none" stroke="${RING}" stroke-width="1.2"/>`
      + t(x, y + 0.5, label, { fs: label.length > 2 ? 14 : 16, w: w || (label.length > 1 ? 14 : 10.5), font: serif, weight: 700 });
  }

  function tick(x, y) {
    return `<path d="M${x - 2.5} ${y}L${x} ${y - 2.5}L${x + 2.5} ${y}L${x} ${y + 2.5}z" fill="${GREEN}"/>`;
  }

  function lines(d, c, w = 1.2, extra = "") {
    return `<path d="${d}" fill="none" stroke="${c}" stroke-width="${w}" ${extra}/>`;
  }

  function drawAxes() {
    const xs = [283.3, 378.3, 474.3, 570.3, 666, 754.7, 842.7, 989.3, 1077.3, 1166.5, 1262, 1357.5, 1453, 1548.7];
    const spans = [3900, 3900, 3900, 3900, 3600, 3600, 6000, 3600, 3600, 3900, 3900, 3900, 3900];
    let o = "";
    let g = "";
    xs.forEach((x) => {
      g += `M${x} 349V447.7M${x} 846.7V945`;
    });
    g += "M277 373.3H1555M277 393.3H1555M277 915.3H1555";
    // left and right grid
    [457.3, 471.3, 611.7, 675.7, 815.3, 829.3].forEach((y) => {
      g += `M160 ${y}H258.7M1572.7 ${y}H1672`;
    });
    g += "M158 812L161 815.3M158 834L161 829.3M1672 815.3L1675 811M1672 829.3L1675 834";
    g += "M185.3 451V834M204.7 451V834M1642.3 451V834M1661.3 451V834";
    o += lines(g, GREEN, 1.2);
    xs.forEach((x, i) => {
      o += tick(x, 393.3) + tick(x, 915.3);
      const lab = String(i + 1);
      o += bubble(x, 339.3, lab) + bubble(x, 955.3, lab);
    });
    o += tick(283.3, 373.3) + tick(1548.7, 373.3);
    spans.forEach((v, i) => {
      const mid = (xs[i] + xs[i + 1]) / 2;
      o += t(mid, 386, v, { w: 22 }) + t(mid, 908.3, v, { w: 22 });
    });
    o += t(916, 366, "51600", { w: 27 });
    [[185.3, 457.3], [204.7, 457.3], [204.7, 471.3], [204.7, 611.7], [204.7, 675.7], [204.7, 815.3], [204.7, 829.3], [185.3, 829.3],
      [1642.3, 457.3], [1661.3, 457.3], [1642.3, 471.3], [1642.3, 611.7], [1642.3, 675.7], [1642.3, 815.3], [1642.3, 829.3], [1661.3, 829.3]]
      .forEach(([x, y]) => { o += tick(x, y); });
    o += bubble(150.7, 457.3, "E", 12) + bubble(150.7, 472, "D", 12) + bubble(150.7, 611.7, "C", 12) + bubble(150.7, 675.7, "B", 12)
      + bubble(150.7, 806, "A", 12) + bubble(150.7, 839.3, "1/A", 11);
    o += bubble(1681.5, 457.3, "E", 12) + bubble(1681.5, 471.5, "D", 12) + bubble(1681.5, 611.7, "C", 12) + bubble(1681.5, 675.3, "B", 12)
      + bubble(1681.5, 805.7, "A", 12) + bubble(1681.5, 839.7, "1/A", 11);
    const rot = { rot: -90, w: 22 };
    o += t(197.5, 464.7, "600", { rot: -90, w: 15 }) + t(196.7, 541, "5700", rot) + t(178.3, 643, "15200", { rot: -90, w: 27 })
      + t(197.7, 643, "2600", rot) + t(197.7, 745, "5700", rot) + t(197.7, 822.7, "600", { rot: -90, w: 15 });
    o += t(1635, 464, "600", { rot: -90, w: 15 }) + t(1635, 539, "5700", rot) + t(1655, 643, "15200", { rot: -90, w: 27 })
      + t(1635.7, 643, "2600", rot) + t(1635.7, 745, "5700", rot) + t(1635.7, 822.7, "600", { rot: -90, w: 15 });
    return o;
  }

  function drawWings() {
    let w = "";
    // left wing
    w += "M277.7 453.3H385.7V468.3M277.7 453.3V836.7H385.7V821.3M281.7 457.3H381.7V832.3H281.7zM385.7 468.3V817.3";
    w += "M281.7 647.3H381.7M385.7 468.3H750M381.7 472.3H750M385.7 817.3H750M385.7 821.3H750";
    // right wing
    w += "M1555 453.3H1447.3V468.7M1555 453.3V836.3H1447.3V817.3M1451.3 457.3H1551.7V832.3H1451.3zM1447.3 468.7V817.3";
    w += "M1451.3 647.3H1551.7M1447.3 469H1085M1451.3 472.7H1085M1447.3 817.3H1085M1451.3 821.5H1085";
    let o = lines(w, "#fff", 1.3);
    let thin = "M282 458L379 647L282 832M386 473L566.7 494.3L750 473M566.7 472.3V494.3";
    thin += "M386 811.7L566.4 790.5L748 809M566.4 790.5V817.3";
    thin += "M1553 458L1453 647L1551.7 831M1085 473L1266 494.6L1447 473M1266 472.7V494.6";
    thin += "M1085 809L1265 790.5L1447 811.7M1265 790.5V817.3";
    thin += "M379 421.7H754.7";
    o += lines(thin, "#f0f0f0", 1.1);
    [[272.7, 460], [279.3, 460], [390.7, 464], [390.7, 470], [272.7, 829], [279.3, 829], [390.7, 820.7], [390.7, 826],
      [1551.7, 460], [1558.7, 460], [1552.7, 828.7], [1559, 828.7]].forEach(([x, y]) => {
      o += `<circle cx="${x}" cy="${y}" r="2.3" fill="none" stroke="${CYAN}" stroke-width=".9"/>`;
    });
    return o;
  }

  // center block, written in the 3x pixels it was measured at
  function drawCore() {
    const r = (x, y, w, h) => `M${x} ${y}h${w}v${h}h${-w}z`;
    let w = "M205 63H1215M205 63V527M1213 63V527M232 133V527M1183 133V527M477 100V527M497 100V527M918 100V527M938 100V527";
    w += "M506 537H745M506 550H745M855 537H910M855 550H910";
    w += "M242 85H265M442 85H468M506 85H541M874 85H910M946 85H973M1150 85H1175M265 63V87M442 63V87M541 63V87M874 63V87M973 63V87M1150 63V87";
    w += "M205 1220H1215M242 1195H265M442 1195H468M506 1195H541M874 1195H910M946 1195H973M1150 1195H1175M265 1195V1220M442 1195V1220M541 1195V1220M874 1195V1220M973 1195V1220M1150 1195V1220";
    w += "M205 695H232V730H320M232 743H482M232 743V1147M205 695V1220M390 730H562M495 743H562M670 730H1025M670 743H922M934 743H1187";
    w += "M1100 730H1187V695H1213V1220M1187 743V1147M482 743V1181M495 743V1181M922 743V1181M934 743V1181";
    w += r(205, 65, 37, 35) + r(205, 100, 37, 33) + r(1175, 65, 38, 35) + r(1175, 100, 38, 33) + r(468, 65, 38, 35) + r(910, 65, 36, 35);
    w += r(205, 527, 37, 36) + r(205, 563, 27, 24) + r(468, 527, 38, 36) + r(910, 527, 36, 36) + r(1175, 527, 38, 36) + r(1187, 563, 26, 24);
    w += r(205, 1147, 37, 38) + r(205, 1185, 37, 35) + r(1175, 1147, 38, 38) + r(1175, 1185, 38, 35) + r(468, 1181, 38, 37) + r(910, 1181, 36, 37);
    w += "M232 70V97M1185 545H1205M1183 1155V1180M232 1155V1180";
    let y = "";
    [[265, 442], [541, 874], [973, 1150]].forEach(([a, b]) => {
      [65, 72, 79, 86, 1197, 1204, 1211, 1218].forEach((v) => { y += `M${a} ${v}H${b}`; });
    });
    [243, 268, 290, 311, 333, 355, 376, 400, 421, 445, 467].forEach((v) => {
      y += `M230 ${v}H345M365 ${v}H482M935 ${v}H1053M1071 ${v}H1187`;
    });
    y += "M346 232H365V480H346zM355 232V480M346 478H482M1053 232H1071V480H1053zM1062 232V480M1053 478H1187";
    y += "M215 587L170 613L218 640L170 666L215 693M1200 587L1247 613L1198 640L1247 666L1200 693";
    const door = "M745 510V548M745 512Q768 512 778 545L800 490L853 470V550M562 735V815L615 790L638 737L645 762L670 770V730";
    let o = lines(w, "#fff", 3.8) + lines(y, YEL, 4) + lines(door, YEL, 5);
    o += lines("M1213 272H1238V310H1213", "#fff", 6);
    const tag = (x, yy, a, b) => `<rect x="${x}" y="${yy}" width="145" height="92" fill="#212830" stroke="#fff" stroke-width="3.6"/>`
      + t(x + 73, yy + 22, a, { fs: 44, w: 70 }) + t(x + 71, yy + 66, b, { fs: 40, w: b.length > 6 ? 117 : 112 });
    o += tag(634, 258, "401", "Q=1361W") + tag(295, 769, "402", "Q=726W") + tag(985, 769, "404", "Q=726W") + tag(634, 900, "403", "Q=1096W");
    o += lines("M320 732L350 800L390 732M1025 732L1060 800L1100 732", YEL, 2.6);
    o += t(705, 400, "B=230", { fs: 44, w: 98 }) + t(366, 893, "B=230", { fs: 44, w: 98 }) + t(1057, 893, "B=230", { fs: 44, w: 98 }) + t(703, 1023, "B=235", { fs: 44, w: 100 });
    const cjk = { font: CJK_FONT, fs: 38 };
    o += t(716, 118, "办公室", { ...cjk, w: 88 }) + t(352, 1166, "水箱间", { ...cjk, w: 90 }) + t(728, 1168, "办公室", { ...cjk, w: 88 }) + t(1042, 1162, "办公室", { ...cjk, w: 88 });
    o += t(288, 950, "FPQ-5", { fs: 38, w: 86, rot: -90 }) + t(1127, 950, "FPQ-5", { fs: 38, w: 86, rot: -90 });
    o += `<rect x="239" y="916" width="15" height="76" rx="4" fill="none" stroke="#fff" stroke-width="3.6"/><rect x="1160" y="916" width="15" height="76" rx="4" fill="none" stroke="#fff" stroke-width="3.6"/>`;
    o += lines("M233 995h16v34h-16zM1164 995h17v34h-17z", CYAN, 3.4);
    o += lines("M250 1005H330L355 985M250 1018H320L355 1052M1058 985L1085 1005H1165M1058 1052L1085 1018H1165", "#fff", 3);
    const oct = (x, yy, label) => `<polygon points="${poly(x, yy, 30)}" fill="#212830" stroke="#e8e8e8" stroke-width="3"/>`
      + t(x, yy + 1, label, { fs: 42, w: 34, weight: 700, font: "Liberation Serif, serif" });
    o += oct(383, 985, "HL6") + oct(383, 1052, "GL6") + oct(1030, 985, "HL7") + oct(1030, 1052, "GL7");
    [[187, 100], [187, 115], [1228, 100], [1228, 115], [187, 1170], [187, 1185], [1228, 1182], [1228, 1200]].forEach(([x, yy]) => {
      o += `<circle cx="${x}" cy="${yy}" r="7" fill="none" stroke="${CYAN}" stroke-width="2.8"/>`;
    });
    o += lines("M636 628H740M636 628L658 650L680 628", GREEN, 2.4) + t(698, 612, "11.100", { fs: 34, w: 80, fill: "#00ff00" });
    return `<g transform="translate(680 430) scale(.33333)">${o}</g>`;
  }

  function drawFrame() {
    let c = "";
    // drawing border
    c += lines("M33 186.5H1695M33 1216.7H1695", CYAN, 1.2);
    c += lines("M33 211H1695M33 1192H1695", "#00f4f4", 4.6);
    // title block
    let b = "M1306.3 1069.3H1695M1306.3 1098.7H1695M1306.3 1157.3H1695M1306.3 1172.7H1695M1306.3 1190H1695";
    b += "M1306.3 1084H1466.5M1306.3 1113.3H1466.5M1306.3 1128.3H1466.5M1306.3 1143.3H1466.5";
    b += "M1306.3 1069.3V1190M1355.8 1069.3V1190M1417.5 1069.3V1190M1466.5 1069.3V1190M1515 1157.3V1190M1576.5 1157.3V1190M1625.6 1157.3V1190";
    c += lines(b, CYAN, 1.2);
    const cy = { font: CJK_FONT, fill: "#00f0f0", weight: 700 };
    [["描  图", 1077], ["设  计", 1092], ["校  对", 1106.5], ["审  核", 1121]].forEach(([s1, y]) => {
      c += `<text x="1331" y="${y}" xml:space="preserve" font-size="10.5" fill="#00f0f0" font-weight="700" font-family='${CJK_FONT}' text-anchor="middle" dominant-baseline="central" textLength="27" lengthAdjust="spacingAndGlyphs">${s1}</text>`;
    });
    c += t(1331, 1137, "专业负责人", { ...cy, fs: 10, w: 42 }) + t(1331, 1151, "工程负责人", { ...cy, fs: 10, w: 42 });
    c += t(1331, 1182, "审定", { ...cy, fs: 16, w: 26, weight: 400 }) + t(1484, 1165, "比 例", { ...cy, fs: 10, w: 28 }) + t(1488, 1182, "日 期", { ...cy, fs: 13, w: 32 });
    c += t(1599, 1165, "设计阶段", { ...cy, fs: 10, w: 40 }) + t(1598, 1182, "档案号", { ...cy, fs: 13, w: 36 });
    c += t(1612.7, 1128, "四层采暖平面图", { font: CJK_FONT, fs: 17, w: 101 });
    c += lines("M33 1171.3H1695", "#f4f4f4", 1.2);
    c += t(1676, 1181.7, "05", { fs: 18, w: 16 });
    // sheet title
    c += t(921.5, 1040, "四层采暖平面图 1:100", { font: CJK_FONT, fs: 20, w: 155 });
    c += lines("M838 1052H1006", "#fff", 3);
    // UCS icon
    c += lines("M58.7 1161V1205M64.5 1210.3H109", "#fff", 1.2) + `<rect x="55.5" y="1205.5" width="9" height="8.5" fill="none" stroke="#fff" stroke-width="1.2"/>`;
    c += lines("M116 1196L126 1210M126 1196L116 1210M62 1143L67 1150L72 1143M67 1150V1157", "#f0f0f0", .9);
    // crosshair
    c += lines("M1670.5 133V1237", "#fff", 1.2) + `<rect x="1664.5" y="1165.5" width="12" height="12" fill="#212830" stroke="#fff" stroke-width="1.2"/>`;
    c += `<rect x="1671" y="1178" width="1" height="1" fill="#fff"/>`;
    return c;
  }

  class CadViewport extends HTMLElement {
    constructor() {
      super();
      this.attachShadow({ mode: "open" }).innerHTML = `
        <style>
          :host { display: block; position: relative; flex: 1; min-width: 0; background: #212830; overflow: hidden; }
          svg { display: block; }
          .label { position: absolute; left: 3px; top: 5px; color: #0e1217; font: 13px ${CJK_FONT}; white-space: nowrap; }
        </style>
        <svg width="1662" height="1104" viewBox="33 133 1662 1104">${drawFrame()}${drawWings()}${drawAxes()}${drawCore()}</svg>
        <div class="label">[-][俯视][二维线框]</div>
        <cad-viewcube></cad-viewcube>`;
    }
  }

  class CadMain extends HTMLElement {
    constructor() {
      super();
      this.attachShadow({ mode: "open" }).innerHTML = `
        <style>:host { display: flex; height: 1104px; flex: none; }</style>
        <cad-dock icons="line xline pline poly rect arc circle cloud spline ellipse ellarc block blockn point hatch grad region table texta addsel"></cad-dock>
        <cad-viewport></cad-viewport>
        <cad-dock right icons="erase cpy mirror offset array move rotate scale stretch trim extend brk brkat join chamfer fillet blend cube3d"></cad-dock>`;
    }
  }

  class CadCommand extends HTMLElement {
    constructor() {
      super();
      this.attachShadow({ mode: "open" }).innerHTML = `
        <style>
          :host { display: grid; grid-template-columns: 27px 1fr 2px; grid-template-rows: 2px 30px 25px; height: 57px; flex: none; background: #222933; }
          .top { grid-column: 1 / 4; background: #303743; }
          .tools { grid-row: 2 / 4; display: flex; flex-direction: column; align-items: center; }
          .grip { width: 17px; height: 5px; margin: 4px 0 4px; background-image: radial-gradient(#d0d3d8 .7px, transparent .8px); background-size: 2px 2px; }
          .hist { box-sizing: border-box; background: #c8c8c8; border-bottom: 1px solid #23282f; color: #111; display: flex; align-items: center; padding: 2px 0 0 3px;
            font: 16.6px "Liberation Mono", "Noto Sans CJK SC", monospace; white-space: pre; }
          .hist b { font: 17.6px ${CJK_FONT}; }
          .input { background: #fff; display: flex; align-items: center; color: #9a9a9a; font: italic 17px ${CJK_FONT}; }
          .input cad-icon { margin-left: 3px; }
          .input span { margin-left: 9px; letter-spacing: .5px; }
        </style>
        <div class="top"></div>
        <div class="tools">
          <div class="grip"></div>
          <cad-icon name="win_x" size="12" style="margin-top:2px"></cad-icon>
          <cad-icon name="wrench" size="17" style="margin-top:5px"></cad-icon>
        </div>
        <div class="hist"><b>选择注释对象或</b> [<b>放弃</b>(U)/<b>模式</b>(M)]: *<b>取消</b>*</div>
        <div></div>
        <div class="input" style="grid-column:2">
          <cad-icon name="term" size="16"></cad-icon>
          <cad-caret style="width:10px;--caret:#666"></cad-caret>
          <span>键入命令</span>
        </div>`;
    }
  }

  class CadStatusbar extends HTMLElement {
    constructor() {
      super();
      const ic = (n, w, size = 18, on = false) => `<cad-icon name="${n}" size="${size}" class="${on ? "on" : ""}" style="width:${w}px"></cad-icon>`;
      const car = (w) => `<cad-caret style="width:${w}px"></cad-caret>`;
      this.attachShadow({ mode: "open" }).innerHTML = `
        <style>
          :host { display: flex; align-items: center; height: 30px; flex: none; color: #d7dade; font: 12px ${UI_FONT}; white-space: nowrap; padding-right: 0; }
          .tabs { display: flex; align-self: flex-start; height: 20px; margin-left: 15px; }
          .tab { display: flex; align-items: center; justify-content: center; clip-path: polygon(0 0, 100% 0, calc(100% - 5px) 100%, 5px 100%); }
          .m { width: 44px; background: #3b4453; color: #fff; font-weight: 600; }
          .l { width: 58px; background: #2e3541; color: #aab0b8; margin-left: -1px; }
          .a { width: 28px; background: #2e3541; color: #c8ccd2; margin-left: 0; font-weight: 700; font-size: 14px; }
          .grp { display: flex; align-items: center; height: 24px; background: #3b4453; margin-left: 2px; flex: none; }
          .on { background: #5f8fc6; height: 24px; }
        </style>
        <div class="tabs">
          <div class="tab m">模型</div><div class="tab l">布局1</div><div class="tab a">+</div>
        </div>
        <div style="flex:1"></div>
        <div class="grp" style="width:30px;justify-content:center">模型</div>
        <div class="grp" style="margin-left:3px">${ic("grid", 22)}${ic("dots", 28)}${car(15)}</div>
        <div class="grp" style="margin-left:3px">${ic("ortho", 22, 18, true)}${ic("polar", 24)}${car(18)}${ic("osnap", 20)}${car(20)}${ic("iso", 24)}${ic("snap3d", 23, 18, true)}${car(16)}</div>
        <div class="grp">${ic("lweight", 25)}</div>
        <div class="grp">${ic("anno1", 22, 18, true)}${ic("anno2", 24)}${ic("anno3", 24)}<span style="width:23px;text-align:center">1:1</span>${car(14)}</div>
        <div class="grp" style="margin-left:1px">${ic("gear", 22)}${car(20)}${ic("cross", 20, 17)}<span style="width:5px"></span></div>
        <div class="grp" style="margin-left:1px">${ic("shapes", 24)}</div>
        <div class="grp">${ic("isolate", 23)}</div>
        <div class="grp" style="margin-left:3px">${ic("full", 25, 16)}${ic("menu3", 27)}</div>`;
    }
  }

  class CadApp extends HTMLElement {
    constructor() {
      super();
      this.attachShadow({ mode: "open" }).innerHTML = `
        <style>
          :host { display: flex; flex-direction: column; box-sizing: border-box; width: 1731px; height: 1328px; overflow: hidden;
            background: #222933; border: solid #0d6f9c; border-width: 3px 2px; }
        </style>
        <slot></slot>`;
    }
  }

  const defs = {
    "cad-icon": CadIcon, "cad-caret": CadCaret, "cad-grip": CadGrip, "cad-combo": CadCombo, "cad-titlebar": CadTitlebar,
    "cad-menubar": CadMenubar, "cad-doctabs": CadDoctabs, "cad-ribbon": CadRibbon, "cad-dock": CadDock, "cad-viewcube": CadViewcube,
    "cad-viewport": CadViewport, "cad-main": CadMain, "cad-command": CadCommand, "cad-statusbar": CadStatusbar, "cad-app": CadApp,
  };
  Object.keys(defs).forEach((name) => customElements.define(name, defs[name]));
})();
</script>
</body>
</html>
